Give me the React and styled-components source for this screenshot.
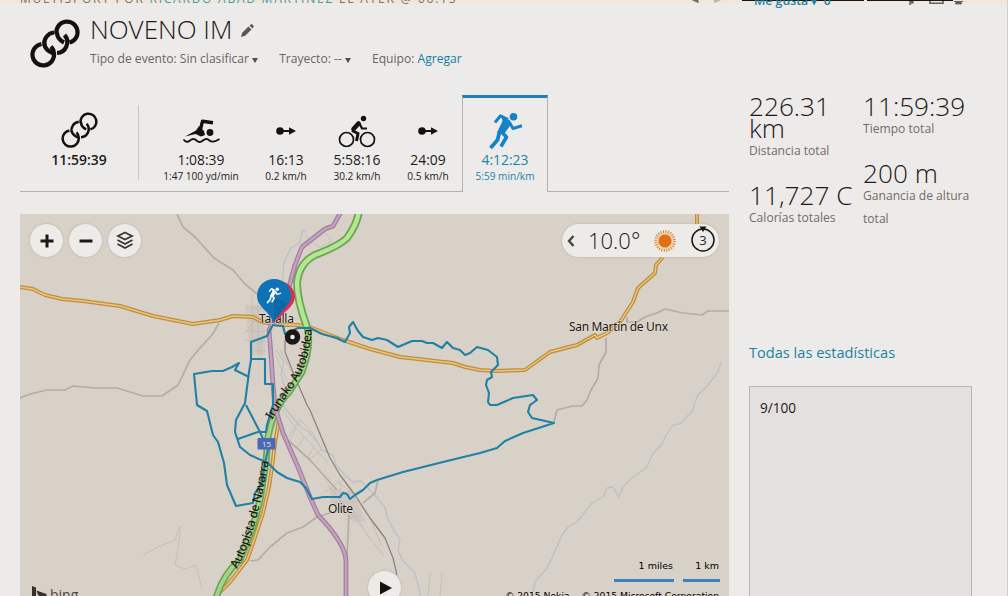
import React from 'react';
import styled, { createGlobalStyle } from 'styled-components';

const GlobalStyle = createGlobalStyle`
  * {
    box-sizing: border-box;
  }
  body {
    margin: 0;
    background: #edebe9;
    font-family: 'Open Sans', 'Noto Sans', sans-serif;
    color: #1d1a19;
    overflow: hidden;
  }
`;

const ChainIcon = ({ size, stroke = 4.2 }) => (
  <svg width={size} height={size} viewBox="0 0 52 52" fill="none" stroke="#15110f" strokeWidth={stroke}>
    <path d="M27.5 16A10.6 10.6 0 1 1 40.5 24.5" />
    <path d="M15.5 27.5A10.8 10.8 0 0 1 25 14.5M35.5 17A10.8 10.8 0 0 1 28 35" />
    <path d="M28 14.5Q28 21 35 24.5" />
    <path d="M12.5 26A10.8 10.8 0 1 0 25 35.5Q24.5 31 22 28.5" />
    <path d="M15.5 26.5Q16 32 24.5 35.5" />
  </svg>
);

const SwimIcon = () => (
  <svg width="38" height="26" viewBox="0 0 38 26" fill="none" stroke="#15110f">
    <path d="M3 18.500L14 12.500L17 8L22 13L23 17L19 18.500L13.500 16Z" fill="#15110f" stroke="none" />
    <path d="M18 13.500L20.500 3.200L31 4.800" strokeWidth="3.400" strokeLinejoin="round" />
    <circle cx="28" cy="14.500" r="3.400" fill="#15110f" stroke="none" />
    <path d="M1.500 21.500q3 4 6.500 1t6.500 0t6.500 0t6.500 0t10-1.500" strokeWidth="1.800" />
  </svg>
);

const TransitionIcon = () => (
  <svg width="20" height="10" viewBox="0 0 20 10" fill="#15110f">
    <circle cx="4" cy="5" r="3.800" />
    <path d="M6 4.100h7V1.300L20 5l-7 3.700V5.900H6z" />
  </svg>
);

const BikeIcon = () => (
  <svg width="38" height="34" viewBox="0 0 38 34" fill="none" stroke="#15110f">
    <circle cx="8.500" cy="25.500" r="7" strokeWidth="1.700" />
    <circle cx="29.500" cy="25.500" r="7" strokeWidth="1.700" />
    <circle cx="25.500" cy="4.500" r="2.700" fill="#15110f" stroke="none" />
    <path d="M20.500 9.500L15.500 15" strokeWidth="4.600" strokeLinecap="round" />
    <path d="M21.500 9.500L24 14.500H29" strokeWidth="2.200" />
    <path d="M14 16.500L20 19.500L18.500 27" strokeWidth="3" />
  </svg>
);

const RunIcon = ({ size = 38, color = '#1583c4' }) => (
  <svg width={size} height={size} viewBox="0 0 38 38" fill="none" stroke={color} strokeLinejoin="round">
    <circle cx="27.500" cy="4.800" r="3.800" fill={color} stroke="none" />
    <path d="M15 3.500L24 8.500L25.500 11.500L18.500 21.500L11 20.500L16.500 9Z" fill={color} stroke="none" />
    <path d="M22 7.500L14.500 3.800L9 10.500" strokeWidth="3" />
    <path d="M23.500 10.500L27 16.500L36 13.800" strokeWidth="3" />
    <path d="M15 19.500L20.500 25L15 34.500" strokeWidth="3.600" />
    <path d="M13.500 20L11.500 28L4.500 36" strokeWidth="3.800" />
  </svg>
);

const legs = [
  { width: 119, icon: <ChainIcon size={39} stroke={3.4} />, time: '11:59:39', total: true },
  { width: 124, icon: <SwimIcon />, time: '1:08:39', pace: '1:47 100 yd/min' },
  { width: 46, icon: <TransitionIcon />, time: '16:13', pace: '0.2 km/h' },
  { width: 96, icon: <BikeIcon />, time: '5:58:16', pace: '30.2 km/h' },
  { width: 46, icon: <TransitionIcon />, time: '24:09', pace: '0.5 km/h' },
];

const yellowRoads = [
  'M20 287L33 289L45 295L62 299L83 301L120 306L153 316L193 324L220 320L233 316L253 317L262 322L280 325L298 325L312 328L343 340L370 349L400 357L453 363L465 367L480 370L495 371L525 370L550 352L577 345L595 335L597 338L607 333L620 322L633 302L638 288L655 273L656 265L663 257',
  'M697 214V224',
];

const grayRoads = [
  'M177 214L183 227L195 237L214 258L233 270L245 284L257 294',
  'M20 398L30 394L47 390H65L73 386L95 388H117L143 396H162L178 385L190 360L200 348L212 335L219 323',
  'M627 317V322H637L645 317L657 313L665 309L683 313L702 315L708 311H729',
  'M606 338V352L599 365L598 378L590 392L587 400L582 406L573 406L557 410L554 422',
  'M288 440L310 460L337 490',
  'M349 515L347 557',
  'M330 513L317 517L303 527L287 533L270 547L258 560L250 561',
  'M378 480L375 493L363 503',
];

const rivers = [
  'M721 362L718 372L708 385L698 395L694 405L693 410L680 424L673 425L665 437L662 444L652 455L647 467L632 478L623 487L619 497L613 487L607 488L603 497L592 503L577 522L568 527L562 535L552 558L547 568L535 582L533 592',
  'M306 233L303 230L300 242L290 249L284 263L282 285',
  'M276 350L284 362L281 375L285 388L279 400L292 417L302 428L308 431L317 442L322 450L333 455L336 465L345 475L353 482L361 481L373 493L385 507L387 517L394 531L400 539L398 550L402 560L415 573L420 593V597',
];

const streets = [
  'M252 295V356M258 298V357M245 330L265 332M243 340L266 341M250 350L266 351M253 308H263M251 315H265M244 334L255 320M261 340V358',
  'M305 236L320 248L332 241L325 233M276 356L288 383L292 396M280 350L294 376',
  'M282 410L296 428L328 463M288 437L300 420L312 432L322 450L308 460M296 428L290 440M304 437L298 447M314 445L308 458',
  'M328 485L360 525L384 556M335 480L352 493M333 502H358M340 482V510M325 492L345 478M350 505L370 540M356 500L372 522L381 545M345 520L360 515',
  'M143 555L158 547L175 540L180 526L179 542L175 565L185 569L196 565L202 589M430 574L428 597M442 574L440 596',
];

const tracks = [
  'M272 326L267 336L251 342V360L249 372L245 403L236 420L235 432L240 447L250 455L268 463L277 472L287 478L300 482L306 488L312 499L323 497L340 497L343 493L347 494L350 499L355 495L363 490L370 483L377 480L403 472L443 462L480 453L497 448L505 441L523 433L554 423L532 418L528 412L530 405L537 400L533 395L513 398L497 405L490 405L488 402L489 393L486 385L487 380L492 377L491 372L498 365L497 357L488 350L477 347L470 353L465 355L460 350L453 348L447 342L442 348L433 343L427 343L422 341L412 341L398 347L387 340L378 338L372 340L363 337L358 331L353 322L349 327L350 333L345 342L337 338L322 334L310 328L298 328L290 332L285 334L283 326L272 325',
  'M249 377L235 370L239 363L232 367L223 371L212 371L194 374L197 405L207 411L213 435L218 442L224 463L227 485L236 506L253 503L255 493L262 483L265 463L268 450L260 432L246 405',
  'M238 439L258 432L266 432L267 425L273 405V384H265V359H251',
];

const RouteMap = () => (
  <MapCanvas viewBox="20 214 709 382" fill="none" strokeLinejoin="round">
    <g stroke="#c6c0ba" strokeWidth="1">
      {streets.map((d) => (
        <path key={d} d={d} />
      ))}
    </g>
    <path d="M330 488L352 492L366 522L354 522L330 503ZM245 305H265V355H250Z" fill="#b8b2ae" opacity=".3" />
    <g stroke="#bfbfc9" strokeWidth="1.300">
      {rivers.map((d) => (
        <path key={d} d={d} />
      ))}
    </g>
    <g stroke="#b5ada5" strokeWidth="1.700">
      {grayRoads.map((d) => (
        <path key={d} d={d} />
      ))}
    </g>
    <path
      d="M285 340V352L295 377L307 405L310 410L330 458L340 475L355 495L370 518L385 538L393 558L397 575"
      stroke="#8d8580"
      strokeWidth="1.300"
    />
    {[
      ['#c18c3c', 4],
      ['#e9c87c', 1.4],
    ].map(([color, width]) => (
      <g key={color} stroke={color} strokeWidth={width}>
        {yellowRoads.map((d) => (
          <path key={d} d={d} />
        ))}
        <path d="M279 420L275 443L272 467L269 487L263 513L253 543L247 560L230 582L214 598" />
      </g>
    ))}
    {[
      ['#6fa455', 8],
      ['#b4e793', 4.4],
    ].map(([color, width]) => (
      <path
        key={color}
        stroke={color}
        strokeWidth={width}
        d="M359 210Q358 223 347 238Q339 246 315 255Q299 263 297 283Q297 300 307 327"
      />
    ))}
    {[
      ['#6fa455', 7],
      ['#a4d489', 3.6],
    ].map(([color, width]) => (
      <path
        key={color}
        stroke={color}
        strokeWidth={width}
        d="M307 327Q312 345 302 372L289 392Q274 407 268 437L266 462L260 500L253 527L240 560Q223 574 216 598"
      />
    ))}
    {[
      ['#a37f9f', 4.8],
      ['#c6a0c1', 2.4],
    ].map(([color, width]) => (
      <path
        key={color}
        stroke={color}
        strokeWidth={width}
        d="M341 212L333 226L325 229L302 247L295 265L289 287L269 330L271 355L273 385L275 407L283 433L298 467L310 497L318 515Q347 545 346 563V598"
      />
    ))}
    <g stroke="#2180a5" strokeWidth="2.100">
      {tracks.map((d) => (
        <path key={d} d={d} />
      ))}
    </g>
    <rect x="257.500" y="438" width="18" height="11.500" rx="1" fill="#4c68b2" />
    <text x="262" y="447" fontSize="8" fill="#dfe5f4">15</text>

    <path id="irunako" d="M272 420L288 394Q310 369 312 326" />
    <path id="navarra" d="M237 569Q258 530 269 458" />
    <MapLabel $bold>
      <textPath href="#irunako" textLength="101">Irunako Autobidea</textPath>
    </MapLabel>
    <MapLabel $bold>
      <textPath href="#navarra" textLength="113">Autopista de Navarra</textPath>
    </MapLabel>
    <MapLabel x="259" y="323" textLength="35">Tafalla</MapLabel>
    <MapLabel x="569" y="331" textLength="99">San Martín de Unx</MapLabel>
    <MapLabel x="328" y="513" textLength="25">Olite</MapLabel>

    <circle cx="292.500" cy="337" r="5" fill="#eee" stroke="#1c1817" strokeWidth="5.500" />
    <path d="M277 323C281 312 295 308 295 296A17 17 0 0 0 276 281Z" fill="#dd2f51" />
    <path d="M274 323C269 311 257 307 257 295.500A17 16.500 0 0 1 291 295.500C291 307 279 311 274 323Z" fill="#0e72b4" />
    <path d="M274 298L288 303C283 310 277 315 274 323Z" fill="#075e97" opacity=".5" />
    <svg x="265" y="287" width="17" height="17">
      <RunIcon size={17} color="#fff" />
    </svg>
  </MapCanvas>
);

const App = () => {
  return (
    <Page>
      <GlobalStyle />
      <TopStrip>
        <Byline>
          MULTISPORT POR <b>RICARDO ABAD MARTÍNEZ</b> EL AYER @ 06:15
        </Byline>
        <Pager>
          <i>◀</i>
          <i>▶</i>
        </Pager>
        <SocialBar>
          <LikeBox>Me gusta ▾ &nbsp;0</LikeBox>
          <Tools>
            <svg width="66" height="6" viewBox="0 0 66 6" fill="none" stroke="#655e59" strokeWidth="1.600">
              <path d="M7 0C11 0 12 1 10 2H8V4M28 0V2.300H41V0" />
              <path d="M52 0H61M53.500 3L56.500 0L59.500 3M56.500 0V3.500" strokeWidth="2.200" />
            </svg>
          </Tools>
        </SocialBar>
      </TopStrip>
      <Body>
        <Main>
          <Header>
            <ChainIcon size={52} />
            <div>
              <Title>
                NOVENO IM
                <svg width="14" height="14" viewBox="0 0 14 14" fill="#5d5652">
                  <path d="M1 13L2.200 8.800L8.500 2.500L11.500 5.500L5.200 11.800ZM9.500 1.600L11 .3Q12 0 13 1T13.500 3L12.400 4.500Z" />
                </svg>
              </Title>
              <Meta>
                <span>
                  Tipo de evento: Sin clasificar <Caret />
                </span>
                <span>
                  Trayecto: -- <Caret />
                </span>
                <span>
                  Equipo: <a>Agregar</a>
                </span>
              </Meta>
            </div>
          </Header>
          <Tabs>
            {legs.map((leg, i) => (
              <Tab key={i} $width={leg.width} $total={leg.total}>
                <TabIcon>{leg.icon}</TabIcon>
                <Time>{leg.time}</Time>
                {leg.pace && <Pace>{leg.pace}</Pace>}
              </Tab>
            ))}
            <ActiveTab>
              <TabIcon>
                <RunIcon />
              </TabIcon>
              <Time>4:12:23</Time>
              <Pace>5:59 min/km</Pace>
            </ActiveTab>
          </Tabs>
          <MapPanel>
            <RouteMap />
            <MapButtons>
              <RoundButton>
                <svg width="14" height="14" viewBox="0 0 14 14" stroke="#1b1716" strokeWidth="3">
                  <path d="M7 .5V13.500M.5 7H13.500" />
                </svg>
              </RoundButton>
              <RoundButton>
                <svg width="14" height="14" viewBox="0 0 14 14" stroke="#1b1716" strokeWidth="3">
                  <path d="M.5 7H13.500" />
                </svg>
              </RoundButton>
              <RoundButton>
                <svg width="18" height="19" viewBox="0 0 18 19" fill="none" stroke="#3a3533" strokeWidth="1.800">
                  <path d="M9 1.500L16 5L9 8.500L2 5ZM1.500 9L9 13L16.500 9M1.500 13L9 17L16.500 13" />
                </svg>
              </RoundButton>
            </MapButtons>
            <Weather>
              <svg width="8" height="12" viewBox="0 0 8 12" fill="none" stroke="#4a4441" strokeWidth="2.400">
                <path d="M6.500 1L2 6L6.500 11" />
              </svg>
              <Degrees>10.0°</Degrees>
              <svg width="24" height="24" viewBox="0 0 24 24">
                <circle cx="12" cy="12" r="9.300" fill="none" stroke="#d98a3c" strokeWidth="3" strokeDasharray="1.200 1.234" />
                <circle cx="12" cy="12" r="6.700" fill="#e46f10" stroke="#ecaa68" />
              </svg>
              <svg width="26" height="28" viewBox="0 0 26 28">
                <circle cx="13" cy="15" r="11" fill="none" stroke="#1b1716" strokeWidth="1.500" />
                <path d="M9.500 1.500H16.500L13 7Z" fill="#1b1716" />
                <text x="13" y="19.500" fontSize="13" textAnchor="middle" fill="#2b2624">3</text>
              </svg>
            </Weather>
            <PlayButton>
              <svg width="12" height="14" viewBox="0 0 12 14">
                <path d="M0 .5L12 7L0 13.500Z" fill="#15110f" />
              </svg>
            </PlayButton>
            <Bing>
              <svg width="15" height="18" viewBox="0 0 15 18" fill="#33302e">
                <path d="M0 0L4 1.500V14L9 11L6 9L4.500 4.500L14.500 8V12L4 18L0 15.500Z" />
              </svg>
              bing
            </Bing>
            <Scales>
              <Scale $width={60}>1 miles</Scale>
              <Scale $width={37}>1 km</Scale>
            </Scales>
            <Copyright>
              <span>© 2015 Nokia</span>
              <span>© 2015 Microsoft Corporation</span>
            </Copyright>
          </MapPanel>
        </Main>
        <Aside>
          <Stats>
            <StatColumn>
              <div>
                <Value>226.31 km</Value>
                <Label>Distancia total</Label>
              </div>
              <div>
                <Value $nowrap>11,727 C</Value>
                <Label>Calorías totales</Label>
              </div>
            </StatColumn>
            <StatColumn>
              <div>
                <Value>11:59:39</Value>
                <Label>Tiempo total</Label>
              </div>
              <div>
                <Value>200 m</Value>
                <Label>Ganancia de altura total</Label>
              </div>
            </StatColumn>
          </Stats>
          <AllStats>Todas las estadísticas</AllStats>
          <Notes>9/100</Notes>
        </Aside>
      </Body>
    </Page>
  );
};

export default App;

const Page = styled.div`
  width: 1008px;
  height: 596px;
  overflow: hidden;
  background: #edebe9;
  border-right: 1px solid #d5d0cd;
`;

const TopStrip = styled.div`
  display: flex;
  height: 8px;
  overflow: hidden;
  padding-left: 20px;
  background: linear-gradient(#f2e6d9 0 3px, #edebe9 3px);
`;

const Byline = styled.div`
  width: 670px;
  margin-top: -9px;
  font-size: 12px;
  line-height: 16px;
  letter-spacing: 1.76px;
  white-space: nowrap;
  color: #77706b;
  b {
    font-weight: 400;
    color: #3c9cab;
  }
`;

const Pager = styled.div`
  display: flex;
  gap: 16px;
  width: 52px;
  margin-top: -10px;
  font-size: 11px;
  line-height: 16px;
  i {
    font-style: normal;
    color: #746c67;
  }
  i + i {
    color: #bdb6b0;
  }
`;

const SocialBar = styled.div`
  display: flex;
  gap: 3px;
`;

const LikeBox = styled.div`
  width: 122px;
  height: 8px;
  padding-left: 12px;
  border-top: 1px solid #17151b;
  font-size: 12.3px;
  font-weight: 600;
  line-height: 0;
  color: #21829c;
`;

const Tools = styled.div`
  width: 86px;
  padding-left: 35px;
  border-top: 1px solid #17151b;
  svg {
    display: block;
  }
`;

const Body = styled.div`
  display: flex;
  gap: 20px;
  padding-left: 20px;
`;

const Main = styled.div`
  width: 709px;
`;

const Header = styled.div`
  display: flex;
  gap: 9px;
  height: 87px;
  padding: 9px 0 0 9px;
  > svg {
    flex: none;
    margin-top: 1px;
  }
`;

const Title = styled.h1`
  display: flex;
  align-items: center;
  gap: 8px;
  margin: -5px 0 0;
  font-size: 26px;
  font-weight: 300;
  line-height: 34px;
  svg {
    margin-top: 3px;
  }
`;

const Meta = styled.div`
  display: flex;
  gap: 21px;
  margin-top: 4px;
  font-size: 12.1px;
  line-height: 18px;
  color: #6b6460;
  a {
    color: #147fa5;
  }
`;

const Caret = styled.i`
  display: inline-block;
  border: 3px solid transparent;
  border-top: 5px solid #544d49;
  border-bottom: 0;
`;

const Tabs = styled.div`
  display: flex;
  height: 97px;
  border-bottom: 1px solid #b5b1ae;
`;

const Tab = styled.div`
  display: flex;
  flex-direction: column;
  align-items: center;
  width: ${({ $width }) => $width}px;
  height: 75px;
  margin-top: 10px;
  padding-top: 4px;
  white-space: nowrap;
  border-right: ${({ $total }) => ($total ? '1px solid #cbc7c4' : '0')};
  font-weight: ${({ $total }) => ($total ? 600 : 400)};
`;

const ActiveTab = styled(Tab)`
  width: 86px;
  height: 97px;
  margin: 0 0 0 11px;
  padding-top: 11px;
  background: #edebe9;
  border: 1px solid #b5b1ae;
  border-top: 3px solid #1b82b5;
  border-bottom: 0;
  color: #1b82ab;
`;

const TabIcon = styled.div`
  display: flex;
  flex: none;
  align-items: center;
  justify-content: center;
  height: 43px;
`;

const Time = styled.div`
  margin-top: -1px;
  font-size: 13.9px;
  line-height: 17px;
`;

const Pace = styled.div`
  font-size: 10.1px;
  font-weight: 500;
  line-height: 16px;
`;

const MapPanel = styled.div`
  position: relative;
  height: 382px;
  margin-top: 22px;
  overflow: hidden;
  background: #d8d1c8;
`;

const MapCanvas = styled.svg`
  display: block;
  width: 709px;
  height: 382px;
`;

const MapLabel = styled.text`
  font-family: 'Noto Sans', 'Open Sans', sans-serif;
  font-size: 12px;
  font-weight: ${({ $bold }) => ($bold ? 500 : 400)};
  fill: #1a1614;
  stroke: #e5dfd6;
  stroke-width: ${({ $bold }) => ($bold ? 0 : 1)}px;
  paint-order: stroke;
`;

/* controls floating over the map */
const MapButtons = styled.div`
  position: absolute;
  top: 10px;
  left: 10px;
  display: flex;
  gap: 6px;
`;

const RoundButton = styled.button`
  display: flex;
  align-items: center;
  justify-content: center;
  width: 33px;
  height: 33px;
  padding: 0;
  border: 0;
  border-radius: 50%;
  background: #edebe8;
  box-shadow: 0 0 2px #aaa39b;
`;

const PlayButton = styled(RoundButton)`
  position: absolute;
  top: 357px;
  left: 348px;
  padding-left: 2px;
`;

const Weather = styled.div`
  position: absolute;
  top: 10px;
  right: 10px;
  display: flex;
  align-items: center;
  width: 157px;
  height: 33px;
  padding-left: 5px;
  border-radius: 17px;
  background: #edebe8;
  box-shadow: 0 0 2px #aaa39b;
  svg:last-child {
    margin: -3px 0 0 13px;
  }
`;

const Degrees = styled.span`
  width: 65px;
  margin: -2px 0 0 13px;
  font-size: 22px;
  font-weight: 300;
  white-space: nowrap;
`;

const Bing = styled.div`
  position: absolute;
  top: 372px;
  left: 12px;
  display: flex;
  gap: 3px;
  font-size: 14px;
  line-height: 17px;
  color: #4a4542;
`;

const Scales = styled.div`
  position: absolute;
  top: 346px;
  right: 9px;
  display: flex;
  gap: 9px;
`;

const Scale = styled.div`
  width: ${({ $width }) => $width}px;
  height: 22px;
  padding-right: 1px;
  border-bottom: 3px solid #3f80c5;
  font: 9.5px 'DejaVu Sans', sans-serif;
  text-align: right;
  color: #000;
`;

const Copyright = styled.div`
  position: absolute;
  top: 376px;
  right: 10px;
  display: flex;
  gap: 12px;
  font: 9.2px 'DejaVu Sans', sans-serif;
  white-space: nowrap;
  color: #000;
`;

const Aside = styled.aside`
  width: 240px;
  padding-top: 87px;
`;

const Stats = styled.div`
  display: flex;
  height: 245px;
`;

const StatColumn = styled.div`
  display: flex;
  flex-direction: column;
  gap: 22px;
  width: 114px;
`;

const Value = styled.div`
  width: 108px;
  font-size: 26.2px;
  font-weight: 300;
  line-height: 22px;
  white-space: ${({ $nowrap }) => ($nowrap ? 'nowrap' : 'normal')};
`;

const Label = styled.div`
  font-size: 12.1px;
  line-height: 23px;
  color: #726b67;
`;

const AllStats = styled.a`
  display: block;
  height: 46px;
  font-size: 14.6px;
  line-height: 24px;
  color: #1b82a5;
`;

const Notes = styled.div`
  width: 223px;
  height: 230px;
  padding: 11px 10px;
  border: 1px solid #b9b5b2;
  background: #e4e0dd;
  font-size: 13.6px;
  line-height: 20px;
`;
